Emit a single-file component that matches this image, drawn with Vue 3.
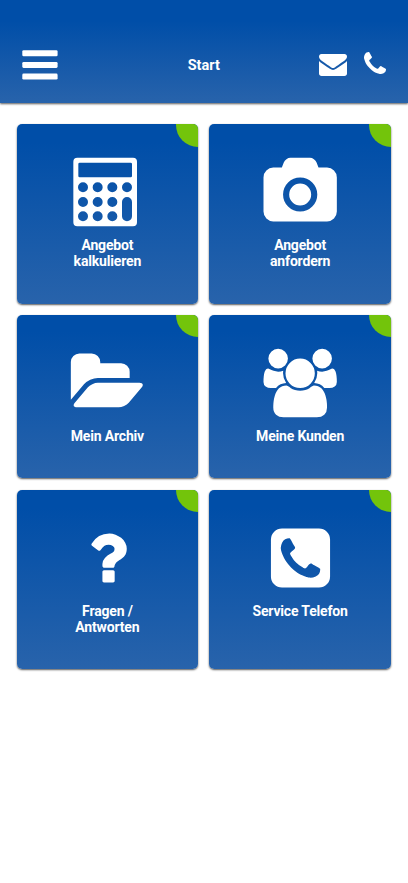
<script setup>
const calculator = 'M202 128H369a12 12 0 0 1 12 12V322a12 12 0 0 1-12 12H202a12 12 0 0 1-12-12V140a12 12 0 0 1 12-12zM209 143a4 4 0 0 0-4 4v36a4 4 0 0 0 4 4H362a4 4 0 0 0 4-4V147a4 4 0 0 0-4-4z' +
  [[219, 217], [263, 217], [307, 217], [351, 217], [219, 261], [263, 261], [307, 261], [219, 304], [263, 304], [307, 304]]
    .map(([x, y]) => `M${x - 15} ${y}a15 15 0 1 0 30 0a15 15 0 1 0-30 0z`).join('') +
  'M336 261a15 15 0 0 1 30 0v43a15 15 0 0 1-30 0z'
const camera = 'M960 672q119 0 203.5 84.5t84.5 203.5-84.5 203.5-203.5 84.5-203.5-84.5-84.5-203.5 84.5-203.5 203.5-84.5zm704-416q106 0 181 75t75 181v896q0 106-75 181t-181 75h-1408q-106 0-181-75t-75-181v-896q0-106 75-181t181-75h224l51-136q19-49 69.5-84.5t103.5-35.5h512q53 0 103.5 35.5t69.5 84.5l51 136h224zm-704 1152q185 0 316.5-131.5t131.5-316.5-131.5-316.5-316.5-131.5-316.5 131.5-131.5 316.5 131.5 316.5 316.5 131.5z'
const folder = 'M1879 952q0 31-31 66l-336 396q-43 51-120.5 86.5t-143.5 35.5h-1088q-34 0-60.5-13t-26.5-43q0-31 31-66l336-396q43-51 120.5-86.5t143.5-35.5h1088q34 0 60.5 13t26.5 43zm-343-344v160h-832q-94 0-197 47.5t-164 119.5l-337 396-5 6q0-4-.5-12.5t-.5-12.5v-960q0-92 66-158t158-66h320q92 0 158 66t66 158v32h544q92 0 158 66t66 158z'
const group = 'M529 896q-162 5-265 128h-134q-82 0-138-40.5t-56-118.5q0-353 124-353 6 0 43.5 21t97.5 42.5 119 21.5q67 0 133-23-5 37-5 66 0 139 81 256zm1071 637q0 120-73 189.5t-194 69.5h-874q-121 0-194-69.5t-73-189.5q0-53 3.5-103.5t14-109 26.5-108.5 43-97.5 62-81 85.5-53.5 111.5-20q10 0 43 21.5t73 48 107 48 135 21.5 135-21.5 107-48 73-48 43-21.5q61 0 111.5 20t85.5 53.5 62 81 43 97.5 26.5 108.5 14 109 3.5 103.5zm-1024-1277q0 106-75 181t-181 75-181-75-75-181 75-181 181-75 181 75 75 181zm704 384q0 159-112.5 271.5t-271.5 112.5-271.5-112.5-112.5-271.5 112.5-271.5 271.5-112.5 271.5 112.5 112.5 271.5zm576 225q0 78-56 118.5t-138 40.5h-134q-103-123-265-128 81-117 81-256 0-29-5-66 66 23 133 23 59 0 119-21.5t97.5-42.5 43.5-21q124 0 124 353zm-128-609q0 106-75 181t-181 75-181-75-75-181 75-181 181-75 181 75 75 181z'
const question = 'M1088 1256v240q0 16-12 28t-28 12h-240q-16 0-28-12t-12-28v-240q0-16 12-28t28-12h240q16 0 28 12t12 28zm316-600q0 54-15.5 101t-35 76.5-55 59.5-57.5 43.5-61 35.5q-41 23-68.5 65t-27.5 67q0 17-12 32.5t-28 15.5h-240q-15 0-25.5-18.5t-10.5-37.5v-45q0-83 65-156.5t143-108.5q59-27 84-56t25-76q0-42-46.5-74t-107.5-32q-65 0-108 29-35 25-107 115-13 16-31 16-12 0-25-8l-164-125q-13-10-15.5-25t5.5-28q160-266 464-266 80 0 161 31t146 83 106 127.5 41 158.5z'
const phoneSquare = 'M1408 1193q0-11-2-16t-18-16.5-40.5-25-47.5-26.5-45.5-25-28.5-15q-5-3-19-13t-25-15-21-5q-15 0-36.5 20.5t-39.5 45-38.5 45-33.5 20.5q-7 0-16.5-3.5t-15.5-6.5-17-9.5-14-8.5q-99-55-170-126.5t-127-170.5q-2-3-8.5-14t-9.5-17-6.5-15.5-3.5-16.5q0-13 20.5-33.5t45-38.5 45-39.5 20.5-36.5q0-10-5-21t-15-25-13-19q-3-6-15-28.5t-25-45.5-26.5-47.5-25-40.5-16.5-18-16-2q-48 0-101 22-46 21-80 94.5t-34 130.5q0 16 2.5 34t5 30.5 9 33 10 29.5 12.5 33 11 30q60 164 216.5 320.5t320.5 216.5q6 2 30 11t33 12.5 29.5 10 33 9 30.5 5 34 2.5q57 0 130.5-34t94.5-80q22-53 22-101zm256-777v960q0 119-84.5 203.5t-203.5 84.5h-960q-119 0-203.5-84.5t-84.5-203.5v-960q0-119 84.5-203.5t203.5-84.5h960q119 0 203.5 84.5t84.5 203.5z"'.replace('"', '')

const tiles = [
  { lines: ['Angebot', 'kalkulieren'], box: '171 120 240 225', path: calculator },
  { lines: ['Angebot', 'anfordern'], box: '165.5 120 240 225', path: camera, place: 'translate(176 128.5) scale(.1146)' },
  { lines: ['Mein Archiv'], box: '171 122.5 240 225', path: folder, place: 'translate(182.5 130) scale(.1149)' },
  { lines: ['Meine Kunden'], box: '165.5 122.5 240 225', path: group, place: 'translate(183.3 131) scale(.1146)' },
  { lines: ['Fragen /', 'Antworten'], box: '171 107.5 240 225', path: question, place: 'translate(189 115.5) scale(.1149)' },
  { lines: ['Service Telefon'], box: '165 107 240 225', path: phoneSquare, place: 'translate(183 114.5) scale(.1155)' }
]
</script>

<template>
  <div class="screen">
    <header class="bar">
      <div class="side">
        <svg class="menu" viewBox="0 0 36 30"><rect x=".3" y=".2" width="35.3" height="6" rx="1.3" /><rect x=".3" y="11.9" width="35.3" height="6" rx="1.3" /><rect x=".3" y="23.6" width="35.3" height="6" rx="1.3" /></svg>
      </div>
      <h1 class="title">Start</h1>
      <div class="side actions">
        <svg class="mail" viewBox="0 256 1792 1408"><path d="M1792 710v794q0 66-47 113t-113 47h-1472q-66 0-113-47t-47-113v-794q44 49 101 87 362 246 497 345 57 42 92.5 65.5t94.5 48 110 24.5h2q51 0 110-24.5t94.5-48 92.5-65.5q170-123 498-345 57-39 100-87zm0-294q0 79-49 151t-122 123q-376 261-468 325-10 7-42.5 31t-54 38.5-52 32.5-57.5 27-50 9h-2q-23 0-50-9t-57.5-27-52-32.5-54-38.5-42.5-31q-91-64-262-182.5t-205-142.5q-62-42-117-115.5t-55-136.5q0-78 41.5-130t118.5-52h1472q65 0 112.5 47t47.5 113z" /></svg>
        <svg class="phone" viewBox="192 128 1408 1408"><path d="M1600 1240q0 27-10 70.5t-21 68.5q-21 50-122 106-94 51-186 51-27 0-53-3.5t-57.5-12.5-47-14.5-55.5-20.5-49-18q-98-35-175-83-127-79-264-216t-216-264q-48-77-83-175-3-9-18-49t-20.5-55.5-14.5-47-12.5-57.5-3.5-53q0-92 51-186 56-101 106-122 25-11 68.5-21t70.5-10q14 0 21 3 18 6 53 76 11 19 30 54t35 63.5 31 53.5q3 4 17.5 25t21.5 35.5 7 28.5q0 20-28.5 50t-62 55-62 53-28.5 46q0 9 5 22.5t8.5 20.5 14 24 11.5 19q76 137 174 235t235 174q2 1 19 11.5t24 14 20.5 8.5 22.5 5q18 0 46-28.5t53-62 55-62 50-28.5q14 0 28.5 7t35.5 21.5 25 17.5q25 15 53.5 31t63.5 35 54 30q70 35 76 53 3 7 3 21z" /></svg>
      </div>
    </header>
    <main class="grid">
      <div v-for="tile in tiles" :key="tile.box + tile.lines[0]" class="tile">
        <svg class="icon" :viewBox="tile.box"><path :d="tile.path" :transform="tile.place" fill-rule="evenodd" /></svg>
        <div class="label"><div v-for="line in tile.lines" :key="line">{{ line }}</div></div>
      </div>
    </main>
  </div>
</template>

<style>
body { margin: 0; background: #fff; }
</style>

<style scoped>
.screen { min-height: 883px; background: #fff; color: #fff; font-family: Roboto, sans-serif; }
svg { display: block; fill: #fff; }
.bar {
  box-sizing: border-box;
  height: 103px;
  padding: 26px 22.5px 0 22px;
  display: flex;
  align-items: center;
  background: linear-gradient(#004ea8 20%, #2863ab);
  box-shadow: 0 1px 2px rgba(0, 0, 0, .65);
}
.side { flex: 1; display: flex; }
.actions { justify-content: flex-end; align-items: center; gap: 16.5px; }
.title { margin: 0; padding-top: 2px; font-size: 14.5px; line-height: 16px; font-weight: 700; }
.menu { width: 36px; height: 30px; }
.mail { width: 28px; height: 22px; }
.phone { width: 22px; height: 22px; margin-top: -4px; }
.grid {
  padding: 21px 17px 0 16.5px;
  display: grid;
  grid-template-columns: 1fr 1fr;
  grid-template-rows: 179.5px 163.5px 179.5px;
  gap: 11.3px 11px;
}
.tile {
  position: relative;
  overflow: hidden;
  padding-top: 31px;
  border-radius: 5px;
  background: linear-gradient(#004ea8 10%, #2863ab);
  box-shadow: 0 1px 2px rgba(0, 0, 0, .65);
}
.tile::after {
  content: '';
  position: absolute;
  top: 0;
  right: 0;
  width: 22.5px;
  height: 22.5px;
  border-bottom-left-radius: 100%;
  background: #73c40b;
}
.icon { width: 80px; height: 75px; margin: 0 auto 7px; }
.label { text-align: center; font-size: 14px; letter-spacing: -.17px; line-height: 16px; font-weight: 700; }
</style>
